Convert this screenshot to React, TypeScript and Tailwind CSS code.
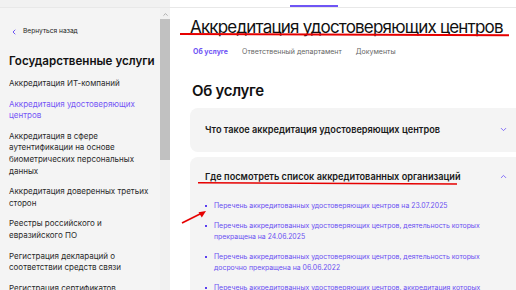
import { ChevronDown, ChevronLeft, ChevronUp } from "lucide-react";

const sidebarItems: { label: string; active?: boolean }[] = [
	{ label: "Аккредитация ИТ-компаний" },
	{ label: "Аккредитация удостоверяющих центров", active: true },
	{
		label:
			"Аккредитация в сфере аутентификации на основе биометрических персональных данных",
	},
	{ label: "Аккредитация доверенных третьих сторон" },
	{ label: "Реестры российского и евразийского ПО" },
	{ label: "Регистрация деклараций о соответствии средств связи" },
	{ label: "Регистрация сертификатов соответствия" },
];

const links = [
	"Перечень аккредитованных удостоверяющих центров на 23.07.2025",
	"Перечень аккредитованных удостоверяющих центров, деятельность которых прекращена на 24.06.2025",
	"Перечень аккредитованных удостоверяющих центров, деятельность которых досрочно прекращена на 06.06.2022",
	"Перечень аккредитованных удостоверяющих центров, аккредитация которых приостановлена",
];

const Sidebar = () => {
	return (
		<aside className="w-[160px] shrink-0 bg-[#f4f4f4] pl-[9px] pr-[8px] pt-[19px]">
			{/* назад */}
			<div className="flex items-center gap-[5px] h-[10px] pl-[1px]">
				<ChevronLeft className="w-[8px] h-[8px] text-[#6f55f5]" strokeWidth={3} />
				<span className="text-[6.6px] text-[#222]">Вернуться назад</span>
			</div>

			<h2 className="mt-[16px] text-[11.6px] leading-[16px] font-semibold text-[#111] whitespace-nowrap">
				Государственные услуги
			</h2>

			<ul className="mt-[9px] flex flex-col gap-[9px]">
				{sidebarItems.map((item) => (
					<li
						key={item.label}
						className={`text-[8px] leading-[11.6px] ${item.active ? "text-[#7557f6]" : "text-[#2a2a2a]"}`}
					>
						{item.label}
					</li>
				))}
			</ul>
		</aside>
	);
};

const App = () => {
	return (
		<div
			className="relative w-[516px] h-[290px] overflow-hidden bg-white"
			style={{ fontFamily: "Inter, 'Noto Sans', sans-serif" }}
		>
			{/* верхняя полоса */}
			<div className="flex h-[8px] border-b border-[#e8e8e8]">
				<div className="w-[170px] bg-[#f1f1f1]" />
				<div className="flex-1 pl-[120px] flex items-end">
					<div className="w-[48px] h-[2px] bg-[#6f55f5]" />
				</div>
			</div>

			<div className="flex h-[282px]">
				<Sidebar />

				{/* скроллбар */}
				<div className="w-[10px] shrink-0 bg-[#f1f1f1] flex flex-col items-center">
					<ChevronUp className="mt-[3px] w-[7px] h-[7px] text-[#a3a3a3]" strokeWidth={3} />
					<div className="mt-[1px] w-[10px] h-[141px] bg-[#c1c1c1]" />
				</div>

				{/* основной контент */}
				<main className="flex-1 pl-[20px] pt-[8px] overflow-hidden">
					<h1 className="text-[17px] leading-[22px] text-[#111] tracking-[-0.8px] whitespace-nowrap">
						Аккредитация удостоверяющих центров
					</h1>

					<nav className="mt-[9px] flex gap-[14px] pl-[3px] text-[7px]">
						<span className="font-bold text-[#6f55f5]">Об услуге</span>
						<span className="text-[#666]">Ответственный департамент</span>
						<span className="text-[#666]">Документы</span>
					</nav>

					<h2 className="mt-[24px] pl-[2px] text-[15px] leading-[18px] font-semibold text-[#111] tracking-[-0.3px]">
						Об услуге
					</h2>

					<div className="mt-[8px] w-[340px] flex flex-col gap-[5px]">
						<div className="h-[44px] rounded-[8px] bg-[#f4f4f4] pl-[15px] pr-[22px] flex items-center justify-between">
							<span className="text-[9.2px] font-semibold text-[#1a1a1a]">
								Что такое аккредитация удостоверяющих центров
							</span>
							<ChevronDown className="w-[9px] h-[9px] text-[#7c66f7]" strokeWidth={2.5} />
						</div>

						<div className="rounded-[8px] bg-[#f4f4f4] pl-[15px] pr-[22px] pt-[14px] pb-[20px]">
							<div className="flex items-center justify-between h-[12px]">
								<span className="text-[9.2px] font-semibold text-[#1a1a1a]">
									Где посмотреть список аккредитованных организаций
								</span>
								<ChevronUp className="w-[9px] h-[9px] text-[#7c66f7]" strokeWidth={2.5} />
							</div>

							<ul className="mt-[18px] flex flex-col gap-[10px]">
								{links.map((text) => (
									<li key={text} className="flex gap-[7px]">
										<span className="mt-[4px] w-[2px] h-[2px] shrink-0 bg-[#5b3ff0]" />
										<span className="w-[275px] shrink-0 text-[6.9px] leading-[10.5px] text-[#6a4ff2]">
											{text}
										</span>
									</li>
								))}
							</ul>
						</div>
					</div>
				</main>
			</div>

			{/* пометки красным */}
			<svg className="absolute inset-0 pointer-events-none" width={516} height={290}>
				<path d="M180 34 L509 35.3" stroke="#e60000" strokeWidth={2} fill="none" />
				<path d="M198 182.7 L457 184" stroke="#e60000" strokeWidth={1.6} fill="none" />
				<path d="M182 223 L202 213" stroke="#e60000" strokeWidth={1.6} fill="none" />
				<path d="M206 211 L198.5 212.2 L201.8 217.5 Z" fill="#e60000" />
			</svg>
		</div>
	);
};

export default App;
